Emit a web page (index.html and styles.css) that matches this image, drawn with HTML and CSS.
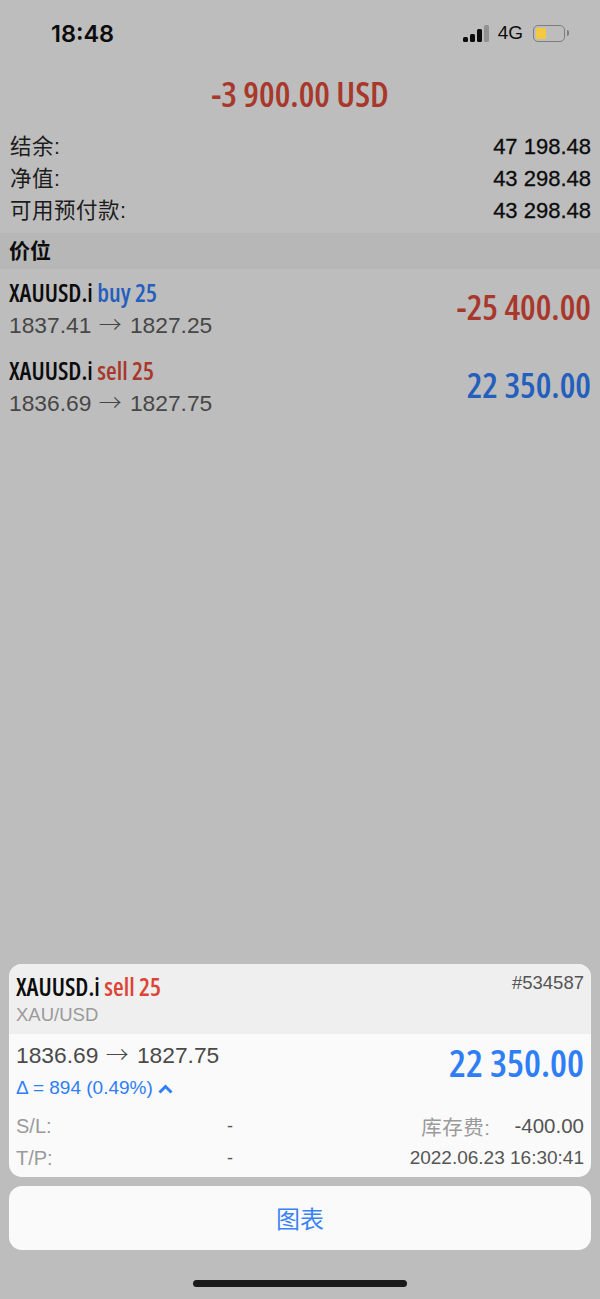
FILE: index.html
```html
<!DOCTYPE html>
<html lang="zh">
<head>
  <meta charset="UTF-8">
  <title>交易</title>
  <link rel="stylesheet" href="styles.css">
</head>
<body>
  <div class="page">
    <div class="status-bar">
      <span class="time">18:48</span>
      <div class="status-icons">
        <div class="signal">
          <i class="bar bar1"></i><i class="bar bar2"></i><i class="bar bar3"></i><i class="bar bar4"></i>
        </div>
        <span class="network">4G</span>
        <div class="battery"><div class="battery-level"></div></div>
        <div class="battery-cap"></div>
      </div>
    </div>

    <div class="total red">-3 900.00 USD</div>

    <div class="summary">
      <div class="summary-row"><span class="summary-label">结余:</span><span class="summary-value">47 198.48</span></div>
      <div class="summary-row"><span class="summary-label">净值:</span><span class="summary-value">43 298.48</span></div>
      <div class="summary-row"><span class="summary-label">可用预付款:</span><span class="summary-value">43 298.48</span></div>
    </div>

    <div class="section-title">价位</div>

    <div class="position">
      <div>
        <div class="pos-title">XAUUSD.i <span class="blue">buy 25</span></div>
        <div class="pos-prices">1837.41 <span class="arrow">→</span> 1827.25</div>
      </div>
      <div class="pos-profit red">-25 400.00</div>
    </div>
    <div class="position">
      <div>
        <div class="pos-title">XAUUSD.i <span class="red">sell 25</span></div>
        <div class="pos-prices">1836.69 <span class="arrow">→</span> 1827.75</div>
      </div>
      <div class="pos-profit blue">22 350.00</div>
    </div>

    <div class="sheet">
      <div class="card">
        <div class="card-head">
          <div>
            <div class="card-title">XAUUSD.i <span class="sell">sell 25</span></div>
            <div class="card-sub">XAU/USD</div>
          </div>
          <div class="ticket">#534587</div>
        </div>
        <div class="card-body">
          <div class="card-main">
            <div>
              <div class="card-prices">1836.69 <span class="arrow">→</span> 1827.75</div>
              <div class="delta">Δ = 894 (0.49%)
                <svg class="chevron" width="15" height="10" viewBox="0 0 15 10"><path d="M1.5 8.5 7.5 2.5l6 6" fill="none" stroke="#2f7ef5" stroke-width="3"/></svg>
              </div>
            </div>
            <div class="card-profit">22 350.00</div>
          </div>
          <div class="details">
            <span class="label col">S/L:</span><span class="dash">-</span>
            <span class="label swap">库存费:</span><span class="value">-400.00</span>
          </div>
          <div class="details">
            <span class="label col">T/P:</span><span class="dash">-</span>
            <span class="date">2022.06.23 16:30:41</span>
          </div>
        </div>
      </div>
      <button class="chart-button">图表</button>
      <div class="home-bar"></div>
    </div>
  </div>
</body>
</html>
```

FILE: styles.css
```css
/* basic styling for the page */
body {
  margin: 0;
  font-family: "Liberation Sans", "Noto Sans CJK SC", sans-serif;
  background: #bdbdbd;
  color: #0c0c0c;
}
.page {
  height: 1299px;
  display: flex;
  flex-direction: column;
  overflow: hidden;
}
.red { color: #a8382b; }
.blue { color: #245fbd; }
.arrow {
  margin: 0 2px 0 1px;
  font-family: "Noto Sans CJK SC", sans-serif;
  font-weight: 300;
  line-height: 0;
}

/* status bar */
.status-bar {
  height: 66px;
  display: flex;
  justify-content: space-between;
  align-items: center;
  padding: 0 31px 0 51px;
}
.time {
  font-family: Inter, sans-serif;
  font-size: 23.5px;
  font-weight: 600;
}
.status-icons {
  display: flex;
  align-items: center;
}
.signal {
  display: flex;
  align-items: flex-end;
  gap: 2px;
  height: 17px;
}
.bar {
  width: 5px;
  border-radius: 1.5px;
  background: #0c0c0c;
}
.bar1 { height: 5px; }
.bar2 { height: 8px; }
.bar3 { height: 13px; }
.bar4 { height: 17px; background: #929292; }
.network {
  font-size: 19px;
  margin: 0 10px 0 9px;
}
.battery {
  width: 26px;
  height: 11px;
  padding: 2px;
  border: 1.5px solid #7d7d7d;
  border-radius: 5px;
}
.battery-level {
  width: 10px;
  height: 100%;
  background: #f5c93f;
  border-radius: 1px;
}
.battery-cap {
  width: 2px;
  height: 6px;
  margin-left: 2px;
  background: #7d7d7d;
  border-radius: 0 2px 2px 0;
}

/* account summary */
.total {
  margin-top: 9px;
  height: 38px;
  line-height: 38px;
  text-align: center;
  font-family: "Open Sans", "Liberation Sans", sans-serif;
  font-stretch: 75%;
  font-size: 35px;
  font-weight: 600;
}
.summary {
  margin-top: 18px;
  padding: 0 9px 6px 10px;
}
.summary-row {
  height: 32px;
  display: flex;
  justify-content: space-between;
  align-items: center;
}
.summary-label {
  font-size: 21.5px;
  letter-spacing: 0.5px;
  padding-bottom: 6px;
  color: #1c1c1c;
}
.summary-value {
  font-size: 22px;
  -webkit-text-stroke: 0.3px #0c0c0c;
}

.section-title {
  height: 36px;
  line-height: 36px;
  padding-left: 9px;
  background: #b7b7b7;
  font-size: 21px;
  font-weight: bold;
}

/* positions */
.position {
  height: 78px;
  padding: 3px 9px 0;
  box-sizing: border-box;
  display: flex;
  justify-content: space-between;
  align-items: center;
}
.pos-title {
  font-family: "Open Sans", "Liberation Sans", sans-serif;
  font-stretch: 75%;
  font-size: 24.5px;
  font-weight: 600;
  line-height: 32px;
}
.pos-prices {
  font-size: 22.8px;
  line-height: 33px;
  color: #474747;
}
.pos-profit {
  font-family: "Open Sans", "Liberation Sans", sans-serif;
  font-stretch: 75%;
  font-size: 35px;
  font-weight: 600;
  padding-bottom: 6px;
}

/* bottom sheet */
.sheet {
  margin-top: auto;
  padding: 0 9px;
  display: flex;
  flex-direction: column;
}
.card {
  border-radius: 13px;
  overflow: hidden;
  background: #fafafa;
}
.card-head {
  height: 70px;
  padding: 6px 7px;
  box-sizing: border-box;
  display: flex;
  justify-content: space-between;
  background: #efefef;
}
.card-title {
  font-family: "Open Sans", "Liberation Sans", sans-serif;
  font-stretch: 75%;
  font-size: 24.5px;
  font-weight: 600;
  line-height: 33px;
}
.sell { color: #dc4436; }
.card-sub {
  font-size: 18.5px;
  line-height: 24px;
  color: #9a9a9a;
}
.ticket {
  font-size: 18.5px;
  line-height: 26px;
  color: #555;
}
.card-body {
  padding: 5px 7px 0;
  height: 143px;
  box-sizing: border-box;
}
.card-main {
  display: flex;
  justify-content: space-between;
  align-items: flex-start;
  height: 71px;
}
.card-prices {
  font-size: 22.8px;
  line-height: 33px;
  color: #4a4a4a;
}
.delta {
  font-size: 19px;
  line-height: 32px;
  color: #2f7ef5;
}
.card-profit {
  font-family: "Open Sans", "Liberation Sans", sans-serif;
  font-stretch: 75%;
  font-size: 38px;
  font-weight: 600;
  line-height: 46px;
  color: #2f7ef5;
}
.details {
  height: 32px;
  display: flex;
  align-items: center;
  font-size: 20px;
}
.label { color: #9a9a9a; }
.col { width: 211px; }
.dash {
  color: #555;
  font-size: 18px;
}
.swap {
  margin-left: auto;
  margin-right: 24px;
  font-size: 20.5px;
  letter-spacing: 0.5px;
}
.value {
  font-size: 20.5px;
  color: #555;
}
.date {
  margin-left: auto;
  font-size: 19px;
  color: #555;
}

.chart-button {
  margin-top: 9px;
  height: 64px;
  padding-bottom: 2px;
  border: none;
  border-radius: 13px;
  background: #fafafa;
  color: #3a83f6;
  font-family: "Noto Sans CJK SC", sans-serif;
  font-size: 24px;
}
.home-bar {
  width: 214px;
  height: 7px;
  margin: 30px auto 12px;
  background: #1a1a1a;
  border-radius: 4px;
}
```
